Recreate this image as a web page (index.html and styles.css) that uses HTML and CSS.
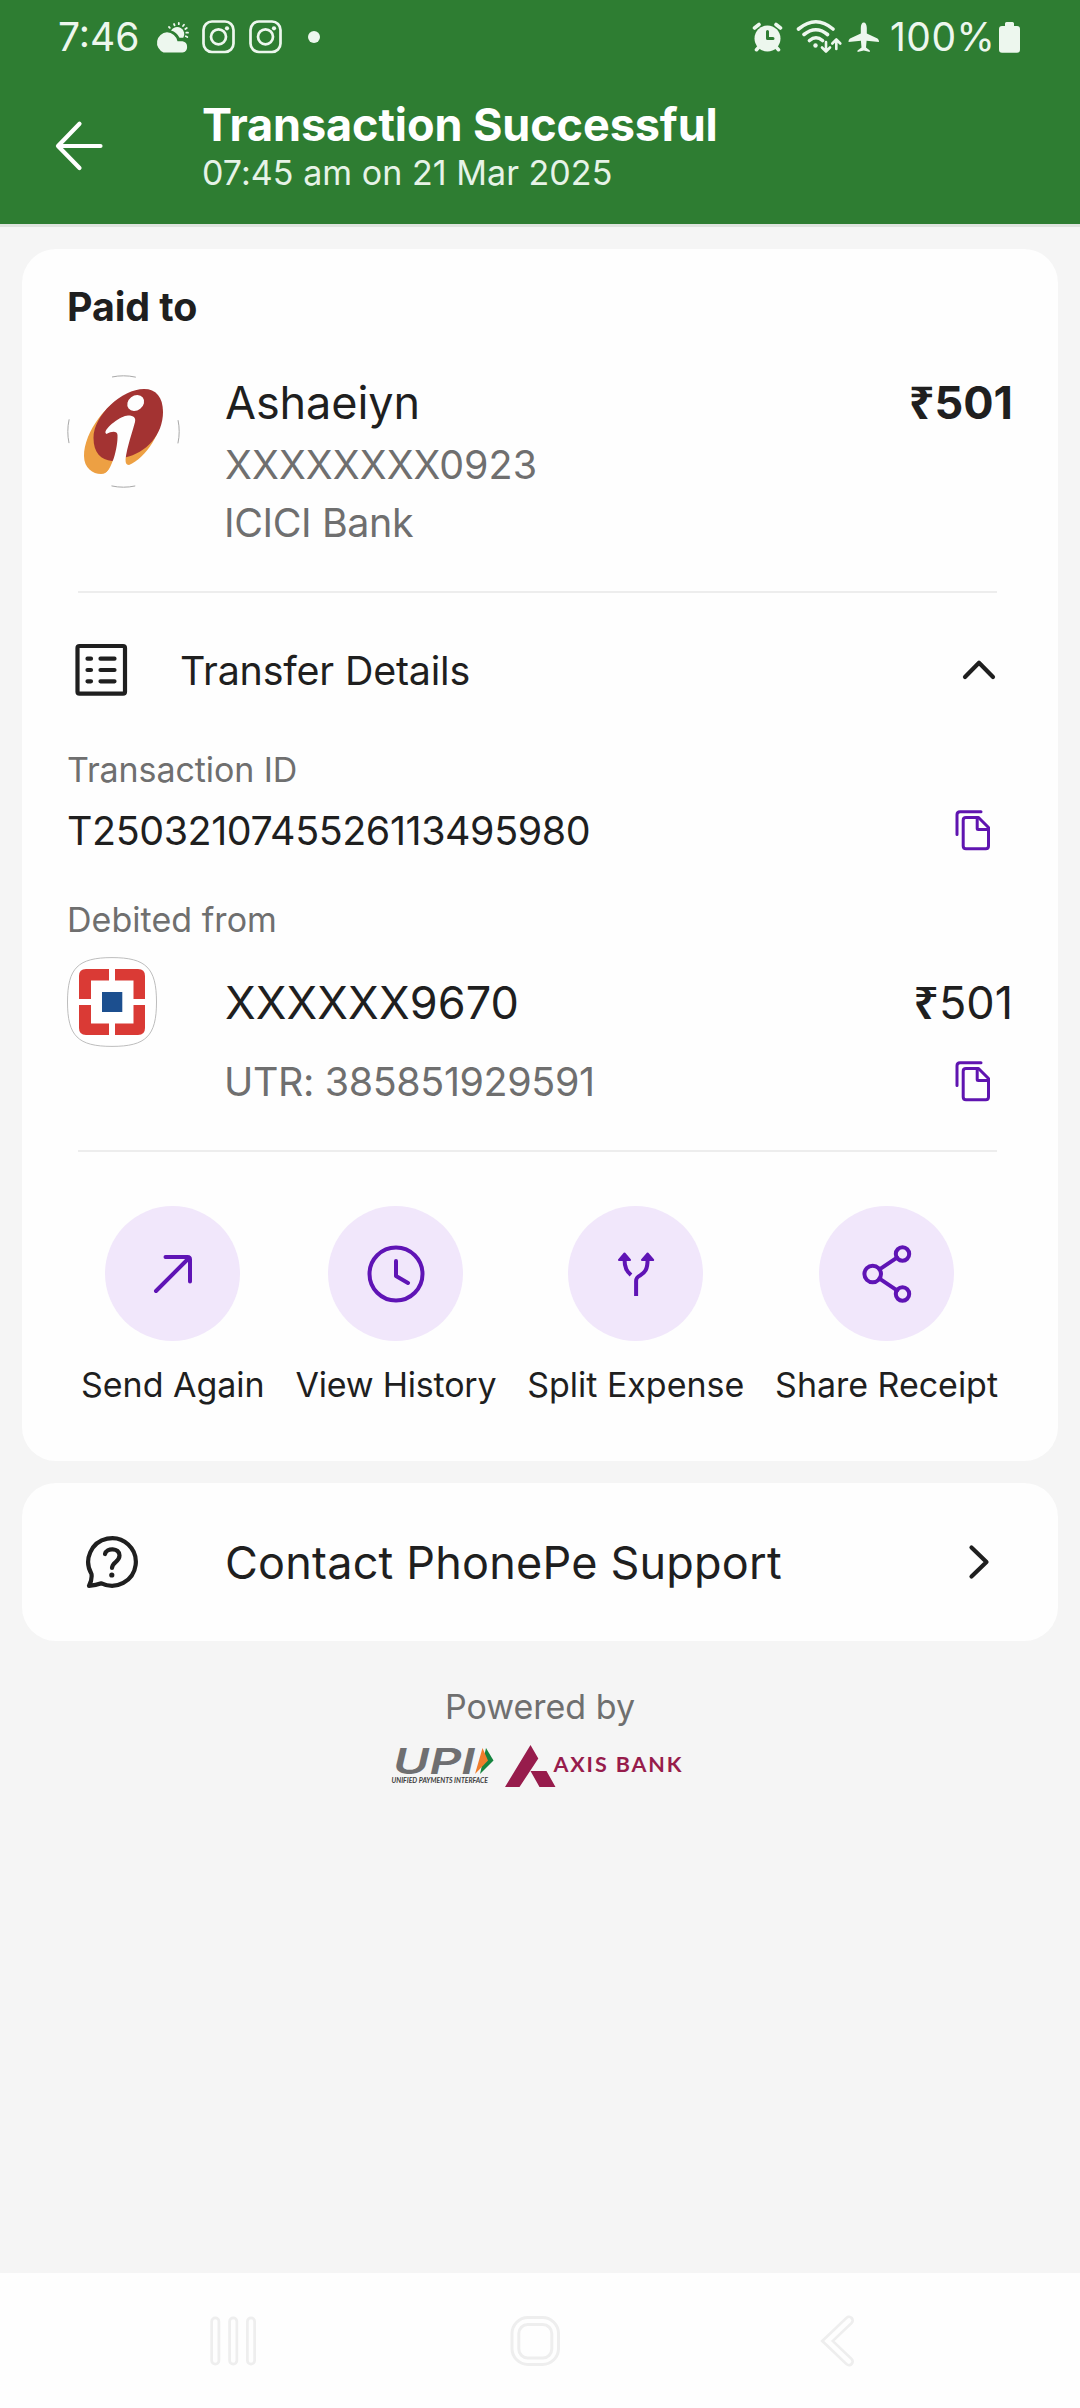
FILE: index.html
```
<!DOCTYPE html>
<html lang="en">
<head>
<meta charset="utf-8">
<title>Transaction Successful</title>
<link rel="stylesheet" href="styles.css">
</head>
<body>
<svg class="defs" width="0" height="0" aria-hidden="true">
  <symbol id="copy" viewBox="0 0 36 41">
    <path d="M26 1.7H5Q2 1.7 2 4.700V24.500" />
    <path d="M11 7.500H23.500L33.500 17.500V36Q33.500 38.700 30.800 38.700H11Q8.200 38.700 8.200 36V10.200Q8.200 7.500 11 7.500Z" />
    <path d="M22.200 8V18.500Q22.200 19.500 23.200 19.500H33" />
  </symbol>
  <symbol id="insta" viewBox="0 0 34 34">
    <rect x="1.500" y="1.500" width="30" height="30.500" rx="8.500" />
    <circle cx="16.500" cy="16.800" r="7.500" />
    <circle class="fill" cx="25" cy="8.300" r="2.100" />
  </symbol>
</svg>

<header class="header">
  <div class="status">
    <span class="clock">7:46</span>
    <svg class="ic weather" viewBox="154 20 36 34" width="36" height="34">
      <path d="M163.500 52.500H182.500A5.700 5.700 0 0 0 182.500 41.300H177.500A11 11 0 0 0 167 32.300A10.500 10.500 0 0 0 163.500 52.500Z"/>
      <path d="M171 30.500A6.800 6.800 0 1 1 183.300 37.800H179.500A13.500 13.500 0 0 0 171 30.500Z"/>
      <path class="rays" d="M174.600 25.300L174 24M178.800 24.200V23M169.800 27.800L169 27M183 26L184 24.700M185.300 29L186.800 28M186.300 32.700H188M185.800 36.300L187.300 37"/>
    </svg>
    <svg class="ic line insta" width="34" height="34"><use href="#insta"/></svg>
    <svg class="ic line insta" width="34" height="34"><use href="#insta"/></svg>
    <span class="dot"></span>
    <svg class="ic alarm" viewBox="753 20 32 34" width="32" height="34">
      <circle cx="768.500" cy="38.500" r="13"/>
      <path class="thick" d="M755.500 28L760 24.500M781.500 28L777 24.500M760 47L757.500 49.700M777 47L779.500 49.700"/>
      <path class="cut" d="M768.500 31.500V38.500H774"/>
    </svg>
    <svg class="ic wifi" viewBox="796 18 48 38" width="48" height="38">
      <path class="thick" d="M799.500 29Q817 14.500 834 29M805 34.500Q817 25 828.500 34.500M810.500 40.500Q817 35 823.500 40.500"/>
      <circle cx="816.500" cy="45.500" r="2.200"/>
      <path class="thin" d="M827 42V51M823 47.500L827 51.500L831 47.500M837.300 49V39.500M833.300 43.500L837.300 39.500L841.300 43.500"/>
    </svg>
    <svg class="ic plane" viewBox="848 20 33 34" width="33" height="34">
      <path d="M864.800 22.500C866.500 22.500 867.800 24.500 867.800 28V33.500L878.500 38.500Q880.200 39.500 880 42L867.600 40.800L867 47.500L870.800 50.500V52L864.800 50.500L858.500 52V50.500L862.500 47.500L861.900 40.800L849.500 42Q849.300 39.500 851 38.500L861.800 33.500V28C861.800 24.500 863 22.500 864.800 22.500Z"/>
    </svg>
    <span class="percent">100%</span>
    <svg class="ic battery" viewBox="1000 21 22 33" width="22" height="33">
      <path d="M1006 26V23.500Q1006 22 1007.500 22H1013.500Q1015 22 1015 23.500V26H1018Q1021 26 1021 29V49.500Q1021 52.700 1018 52.700H1003Q1000 52.700 1000 49.500V29Q1000 26 1003 26Z"/>
    </svg>
  </div>
  <div class="titlebar">
    <svg class="back" viewBox="54 119 50 52" width="50" height="52"><path d="M100.500 145H58.500M79.500 122.700L58 145L79.500 167"/></svg>
    <div class="titles">
      <h1 class="title">Transaction Successful</h1>
      <p class="subtitle">07:45 am on 21 Mar 2025</p>
    </div>
  </div>
</header>

<main class="content">
  <section class="card">
    <h2 class="paid">Paid to</h2>
    <div class="payee">
      <svg class="avatar" viewBox="67 375 113 113" width="113" height="113">
        <circle class="ring" cx="123.500" cy="431.500" r="55.700"/>
        <path class="orange" d="M128 396C108 400 84 432 84 456C84 468 93 474 101 474C108 474 112 466 114 461L125 455C125 462 126 465 129 465C146 458 163 432 162.500 409Z"/>
        <path class="red" d="M144 389C156 389 163 397 163 412C163 435 146 453 125 457.500L112 461C101 460 93.500 453 93.500 438C93.500 415 122 389 144 389Z"/>
        <ellipse class="white" cx="135.700" cy="403" rx="9" ry="7.400" transform="rotate(-38 135.700 403)"/>
        <path class="white" d="M105.500 433C104.500 428 121 415.500 128 415.500C134 415.500 136 418 135 422C130 440 126 450 125 465L124 476H103C112 470 118 448 117.500 435C117.300 431 112 431 106.500 434Z"/>
      </svg>
      <div class="who">
        <div class="name">Ashaeiyn</div>
        <div class="sub">XXXXXXXX0923</div>
        <div class="sub bank">ICICI Bank</div>
      </div>
      <div class="amount strong"><span class="rs">₹</span>501</div>
    </div>
    <hr class="rule">
    <div class="details-head">
      <svg class="dark" viewBox="75 643 53 54" width="53" height="54">
        <rect x="77.500" y="646" width="47.500" height="47.700" rx="2"/>
        <path d="M87.500 658.700H91M87.500 670H91M87.500 681.300H91M100.500 658.700H114.500M100.500 670H114.500M100.500 681.300H114.500"/>
      </svg>
      <span class="details-title">Transfer Details</span>
      <svg class="dark" viewBox="962 658 34 24" width="34" height="24"><path d="M965 677L979 662.700L993 677"/></svg>
    </div>
    <div class="label">Transaction ID</div>
    <div class="txn"><span class="txn-id">T2503210745526113495980</span><svg class="copy" width="36" height="41"><use href="#copy"/></svg></div>
    <div class="label debited">Debited from</div>
    <div class="account">
      <svg class="hdfc" viewBox="67 957 90 90" width="90" height="90">
        <path class="frame" d="M112 957.600C146 957.600 156.500 968 156.500 1002S146 1046.400 112 1046.400S67.500 1036 67.500 1002S78 957.600 112 957.600Z"/>
        <path class="hred" d="M86 969H109V980.500H91V999H79V976Q79 969 86 969ZM115 969H138Q145 969 145 976V999H133.500V980.500H115ZM79 1005H91V1023.500H109V1035H86Q79 1035 79 1028ZM133.500 1005H145V1028Q145 1035 138 1035H115V1023.500H133.500Z"/>
        <path class="hblue" d="M102 992H122.300V1012H102Z"/>
      </svg>
      <span class="number">XXXXXX9670</span>
      <span class="amount"><span class="rs">₹</span>501</span>
    </div>
    <div class="utr"><span class="utr-id">UTR: 385851929591</span><svg class="copy" width="36" height="41"><use href="#copy"/></svg></div>
    <hr class="rule">
    <div class="actions">
      <div class="action">
        <span class="disc"><svg viewBox="106 1206 135 135" width="135" height="135"><path d="M157 1291L190 1258M166.500 1257H188.500Q191 1257 191 1259.500V1281.500"/></svg></span>
        <span class="caption">Send Again</span>
      </div>
      <div class="action history">
        <span class="disc"><svg viewBox="328 1206 135 135" width="135" height="135"><circle cx="396" cy="1274" r="26.500"/><path d="M396 1261V1276L408 1283"/></svg></span>
        <span class="caption">View History</span>
      </div>
      <div class="action">
        <span class="disc"><svg viewBox="568 1206 135 135" width="135" height="135"><path class="butt" d="M624.500 1259C624.500 1268 627 1271.500 631 1275M647.600 1259C647.600 1270 645 1272 640.500 1275.200C637 1277 636.100 1278 636.100 1281V1296"/><path class="head" d="M624.500 1253.500L630 1260H619ZM647.600 1253.500L653.200 1260H642Z"/></svg></span>
        <span class="caption">Split Expense</span>
      </div>
      <div class="action">
        <span class="disc"><svg viewBox="818 1206 135 135" width="135" height="135"><circle cx="871.700" cy="1274" r="8.300"/><circle cx="901.500" cy="1254" r="6.700"/><circle cx="901.500" cy="1294" r="6.700"/><path d="M878.500 1269.300L896 1257.700M878.500 1278.700L896 1290.300"/></svg></span>
        <span class="caption">Share Receipt</span>
      </div>
    </div>
  </section>

  <section class="card support">
    <svg class="dark" viewBox="85 1535 54 54" width="54" height="54">
      <path d="M91.500 1574A23.800 23.800 0 1 1 101.500 1583.300Q96 1585.500 89 1585.800Q92.300 1580 91.500 1574Z"/>
      <path d="M105 1554C106.500 1547.500 119.500 1547.500 119.500 1555.500C119.500 1562 112 1562 112 1568"/>
      <circle class="qdot" cx="111.800" cy="1575" r="2.600"/>
    </svg>
    <span class="support-title">Contact PhonePe Support</span>
    <svg class="dark" viewBox="968 1544 23 36" width="23" height="36"><path d="M971.500 1547.500L986.500 1562L971.500 1576.500"/></svg>
  </section>

  <footer class="powered">
    <p class="powered-text">Powered by</p>
    <svg class="logos" viewBox="390 1740 296 50" width="296" height="50">
      <text class="upi" x="393" y="1773.700" textLength="82" lengthAdjust="spacingAndGlyphs">UPI</text>
      <path class="ugreen" d="M486 1748L493.500 1760.500L480 1774Z"/>
      <path class="uorange" d="M482.500 1748L488 1760.500L475 1774Z"/>
      <text class="upi-sub" x="391.500" y="1782.500" textLength="96.500" lengthAdjust="spacingAndGlyphs">UNIFIED PAYMENTS INTERFACE</text>
      <path class="axis" d="M530.500 1745L538.300 1758.500L519.500 1787H505ZM530.500 1771H546.500L555.500 1787H539.500Z"/>
      <text class="axis-text" x="553.500" y="1772" textLength="128" lengthAdjust="spacing">AXIS BANK</text>
    </svg>
  </footer>
</main>

<nav class="navbar">
  <svg viewBox="209 2314 48 54" width="48" height="54"><path d="M215.300 2321.500V2360.500M233.200 2321.500V2360.500M251 2321.500V2360.500" class="outer"/><path d="M215.300 2321.500V2360.500M233.200 2321.500V2360.500M251 2321.500V2360.500" class="inner"/></svg>
  <svg viewBox="509 2314 52 54" width="52" height="54"><rect x="512" y="2317.500" width="46.500" height="47" rx="16"/><rect x="518.800" y="2324.500" width="33" height="33.500" rx="9"/></svg>
  <svg viewBox="820 2314 36 54" width="36" height="54"><path d="M849 2320.500L827.500 2341L849 2361.500" class="outer"/><path d="M849 2320.500L827.500 2341L849 2361.500" class="inner"/></svg>
</nav>
</body>
</html>
```
FILE: styles.css
```
* { box-sizing: border-box; }

body {
  margin: 0;
  width: 1080px;
  height: 2408px;
  display: flex;
  flex-direction: column;
  background: #f5f5f5;
  color: #1f1f1f;
  font-family: Inter, "Noto Sans", sans-serif;
  overflow: hidden;
}

h1, h2, p { margin: 0; }
svg { display: block; flex: none; }
.defs { position: absolute; }

/* Header */
.header {
  height: 227px;
  flex: none;
  background: #2e7d32;
  border-bottom: 3px solid #dfe3df;
}
.status {
  height: 74px;
  padding-left: 58px;
  display: flex;
  align-items: center;
  font-size: 39px;
  line-height: 74px;
  color: #edf7ee;
}
.clock { width: 96px; }
.ic { fill: #edf7ee; }
.weather .rays { stroke: #edf7ee; stroke-width: 1.8; stroke-linecap: round; }
.line { fill: none; stroke: #edf7ee; stroke-width: 2.7; }
.line .fill, #insta .fill { fill: #edf7ee; stroke: none; }
.weather { margin-right: 12px; }
.insta { margin-right: 13px; }
.dot { width: 12px; height: 12px; border-radius: 50%; background: #edf7ee; margin-left: 12px; margin-right: 432px; }
.thick, .thin, .cut { fill: none; stroke: #edf7ee; stroke-width: 3.6; stroke-linecap: round; stroke-linejoin: round; }
.thin { stroke-width: 2.6; }
.cut { stroke: #2e7d32; stroke-width: 3; }
.alarm { margin-right: 11px; }
.wifi { margin-right: 4px; }
.plane { margin-right: 10px; }
.percent { width: 109px; letter-spacing: 0.5px; }
.titlebar { display: flex; align-items: center; padding: 27px 0 0 54px; }
.back { fill: none; stroke: #fff; stroke-width: 4.2; stroke-linecap: round; stroke-linejoin: round; margin-top: -6px; }
.titles { margin-left: 98px; color: #fff; }
.title { font-size: 45px; font-weight: 700; line-height: 47px; letter-spacing: -0.1px; }
.subtitle { font-size: 34px; line-height: 49px; letter-spacing: 0.05px; color: #e6f3e7; }

/* Cards */
.content { flex: 1; padding: 22px 22px 0; }
.card { background: #fefefe; border-radius: 34px; padding: 36px 45px 54px; }
.paid { font-size: 39.4px; font-weight: 700; line-height: 44px; letter-spacing: -0.1px; }
.payee { display: flex; margin-top: 46px; height: 177px; }
.who { margin-left: 45px; flex: 1; }
.name { font-size: 45px; line-height: 55px; letter-spacing: -0.1px; margin-bottom: 6px; }
.sub { font-size: 39.4px; line-height: 58px; color: #6f6f6f; letter-spacing: 0.07px; }
.bank { letter-spacing: -0.4px; margin-left: -1px; }
.amount { font-size: 45px; line-height: 55px; }
.strong { font-weight: 700; }
.rs { font-family: "Noto Sans", sans-serif; font-weight: 600; line-height: 1; }
.strong .rs { font-weight: 700; }
.rule { border: 0; height: 2px; background: #ededed; margin: 39px 16px 0 11px; }

.ring { fill: none; stroke: #a8a8a8; stroke-width: 1; stroke-dasharray: 24 63.500; stroke-dashoffset: 12; }
.orange { fill: #eda043; }
.red { fill: #a33332; }
.white { fill: #fefefe; }

.dark { fill: none; stroke: #1f1f1f; stroke-width: 4.2; stroke-linecap: round; stroke-linejoin: round; }
.qdot { fill: #1f1f1f; stroke: none; }
.details-head { height: 154px; display: flex; align-items: center; padding: 0 17px 0 8px; }
.details-title { flex: 1; margin-left: 52px; padding-top: 1px; font-size: 39.4px; letter-spacing: -0.18px; }
.label { font-size: 34px; line-height: 45px; color: #6f6f6f; letter-spacing: -0.1px; }
.debited { margin-top: 28px; letter-spacing: 0.04px; }
.txn, .utr { display: flex; align-items: center; justify-content: space-between; padding-right: 22px; }
.txn { height: 77px; }
.txn-id { font-size: 39.4px; letter-spacing: -0.4px; }
.copy { fill: none; stroke: #5f14b0; stroke-width: 3; stroke-linecap: round; stroke-linejoin: round; }
.account { display: flex; align-items: center; height: 90px; margin-top: 15px; }
.number { flex: 1; margin-left: 68px; font-size: 45px; letter-spacing: 0.08px; }
.frame { fill: #fff; stroke: #bdbdbd; stroke-width: 1; }
.hred { fill: #da3a35; }
.hblue { fill: #1c4f8f; }
.utr { height: 69px; padding-left: 157px; color: #6f6f6f; }
.utr-id { font-size: 39.4px; letter-spacing: -0.36px; }
.utr + .rule { margin-top: 34px; }

/* Quick actions */
.actions { display: flex; justify-content: space-between; padding: 54px 15px 0 14px; }
.action { display: flex; flex-direction: column; align-items: center; }
.disc { border-radius: 50%; background: #f1e7fb; }
.disc svg { fill: none; stroke: #5f14b5; stroke-width: 4; stroke-linecap: round; stroke-linejoin: round; }
.disc .butt { stroke-linecap: butt; }
.disc .head { fill: #5f14b5; stroke-width: 2; }
.caption { font-size: 34px; line-height: 45px; margin-top: 21px; letter-spacing: -0.03px; white-space: nowrap; }
.history .caption { letter-spacing: -0.2px; }

.support { display: flex; align-items: center; height: 158px; margin-top: 22px; padding: 0 67px 0 63px; }
.support-title { flex: 1; margin-left: 86px; font-size: 45px; letter-spacing: 0.2px; }

.powered { margin-top: 43px; }
.powered-text { font-size: 34px; line-height: 45px; text-align: center; color: #6f6f6f; }
.logos { margin: 11px 0 0 368px; }
.upi { font: italic 600 36px Inter, sans-serif; fill: #6f6f71; }
.upi-sub { font: italic 700 7px Lato, sans-serif; fill: #3c3c3c; }
.ugreen { fill: #15843f; }
.uorange { fill: #ef7d2c; }
.axis { fill: #971c4c; }
.axis-text { font: 700 21.500px Lato, sans-serif; fill: #971c4c; }

/* System navigation */
.navbar { height: 135px; flex: none; display: flex; align-items: center; background: #fefefe; padding-left: 209px; }
.navbar svg { fill: none; stroke: #eee; stroke-width: 3; }
.navbar svg + svg { margin-left: 252px; }
.navbar svg + svg + svg { margin-left: 259px; }
.navbar .outer, .navbar .inner { stroke-linecap: round; }
.navbar .outer { stroke-width: 10; }
.navbar .inner { stroke: #fefefe; stroke-width: 4.500; }
```
